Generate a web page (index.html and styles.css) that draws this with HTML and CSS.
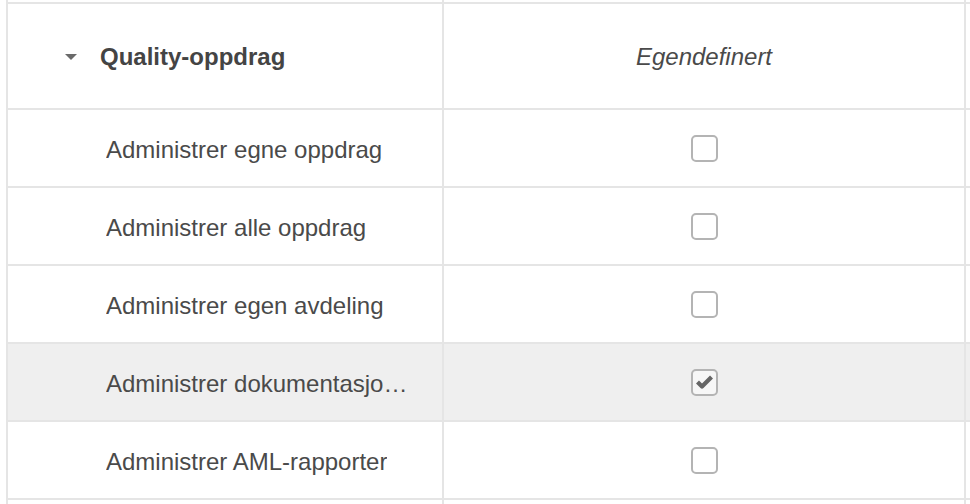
FILE: index.html
```html
<!DOCTYPE html>
<html lang="nb">

<head>
    <meta charset="UTF-8">
    <title>Rettigheter</title>
    <link rel="stylesheet" href="styles.css">
</head>

<body>
    <div class="grid">
        <!-- row above, scrolled out of view -->
        <div class="row row-cut">
            <div class="cell cell-name"></div>
            <div class="cell cell-value"></div>
            <div class="cell cell-rest"></div>
        </div>

        <div class="row row-group">
            <div class="cell cell-name">
                <span class="caret"></span>
                <span class="group-title">Quality-oppdrag</span>
            </div>
            <div class="cell cell-value">
                <span class="role-title">Egendefinert</span>
            </div>
            <div class="cell cell-rest"></div>
        </div>

        <div class="row">
            <div class="cell cell-name"><span class="label">Administrer egne oppdrag</span></div>
            <div class="cell cell-value"><span class="checkbox"></span></div>
            <div class="cell cell-rest"></div>
        </div>

        <div class="row">
            <div class="cell cell-name"><span class="label">Administrer alle oppdrag</span></div>
            <div class="cell cell-value"><span class="checkbox"></span></div>
            <div class="cell cell-rest"></div>
        </div>

        <div class="row">
            <div class="cell cell-name"><span class="label">Administrer egen avdeling</span></div>
            <div class="cell cell-value"><span class="checkbox"></span></div>
            <div class="cell cell-rest"></div>
        </div>

        <div class="row row-active">
            <div class="cell cell-name"><span class="label" title="Administrer dokumentasjonskrav">Administrer dokumentasjonskrav</span></div>
            <div class="cell cell-value">
                <span class="checkbox checked">
                    <svg viewBox="0 0 27 27" width="27" height="27">
                        <path d="M6.5 13 L11 17.5 L20.5 8" fill="none" stroke="#666" stroke-width="4.2" stroke-linejoin="round"/>
                    </svg>
                </span>
            </div>
            <div class="cell cell-rest"></div>
        </div>

        <div class="row">
            <div class="cell cell-name"><span class="label">Administrer AML-rapporter</span></div>
            <div class="cell cell-value"><span class="checkbox"></span></div>
            <div class="cell cell-rest"></div>
        </div>

        <!-- next row starts just below the fold -->
        <div class="row row-cut row-last">
            <div class="cell cell-name"></div>
            <div class="cell cell-value"></div>
            <div class="cell cell-rest"></div>
        </div>
    </div>
</body>

</html>
```

FILE: styles.css
```css
html,
body {
    margin: 0;
    padding: 0;
    overflow: hidden;
    background-color: #ffffff;
}

body {
    font-family: "Liberation Sans", Arial, Helvetica, sans-serif;
    font-size: 24px;
    color: #4a4a4a;
}

.grid {
    display: flex;
    flex-direction: column;
    width: 1200px;
    margin-left: 6px;
    border-left: 2px solid #e5e5e5;
}

.row {
    display: flex;
    height: 76px;
    border-bottom: 2px solid #e5e5e5;
}

.row-cut {
    height: 2px;
}

.row-last {
    height: 10px;
    border-bottom: none;
}

.row-group {
    height: 104px;
}

.row-active {
    background-color: #efefef;
}

.cell {
    display: flex;
    align-items: center;
    box-sizing: border-box;
}

.cell-name {
    width: 436px;
    padding-left: 98px;
    padding-right: 28px;
    padding-top: 3px;
    border-right: 2px solid #e5e5e5;
}

.row-group .cell-name {
    padding-left: 57px;
    padding-top: 1px;
}

.cell-value {
    width: 522px;
    justify-content: center;
    border-right: 2px solid #e5e5e5;
}

.row-group .cell-value {
    padding-top: 1px;
}

.cell-rest {
    flex: 1;
}

.label {
    white-space: nowrap;
    overflow: hidden;
    text-overflow: ellipsis;
}

/* group header */
.caret {
    width: 0;
    height: 0;
    border-left: 6px solid transparent;
    border-right: 6px solid transparent;
    border-top: 6px solid #6a6a6a;
    margin-right: 23px;
    margin-top: 1px;
}

.group-title {
    font-weight: bold;
    color: #444444;
}

.role-title {
    font-style: italic;
}

/* checkboxes */
.checkbox {
    display: block;
    width: 27px;
    height: 27px;
    box-sizing: border-box;
    border: 2px solid #b4b4b4;
    border-radius: 5px;
    background-color: #ffffff;
    position: relative;
}

.checkbox.checked {
    background-color: #f7f7f7;
}

.checkbox svg {
    position: absolute;
    left: -2px;
    top: -2px;
}
```
